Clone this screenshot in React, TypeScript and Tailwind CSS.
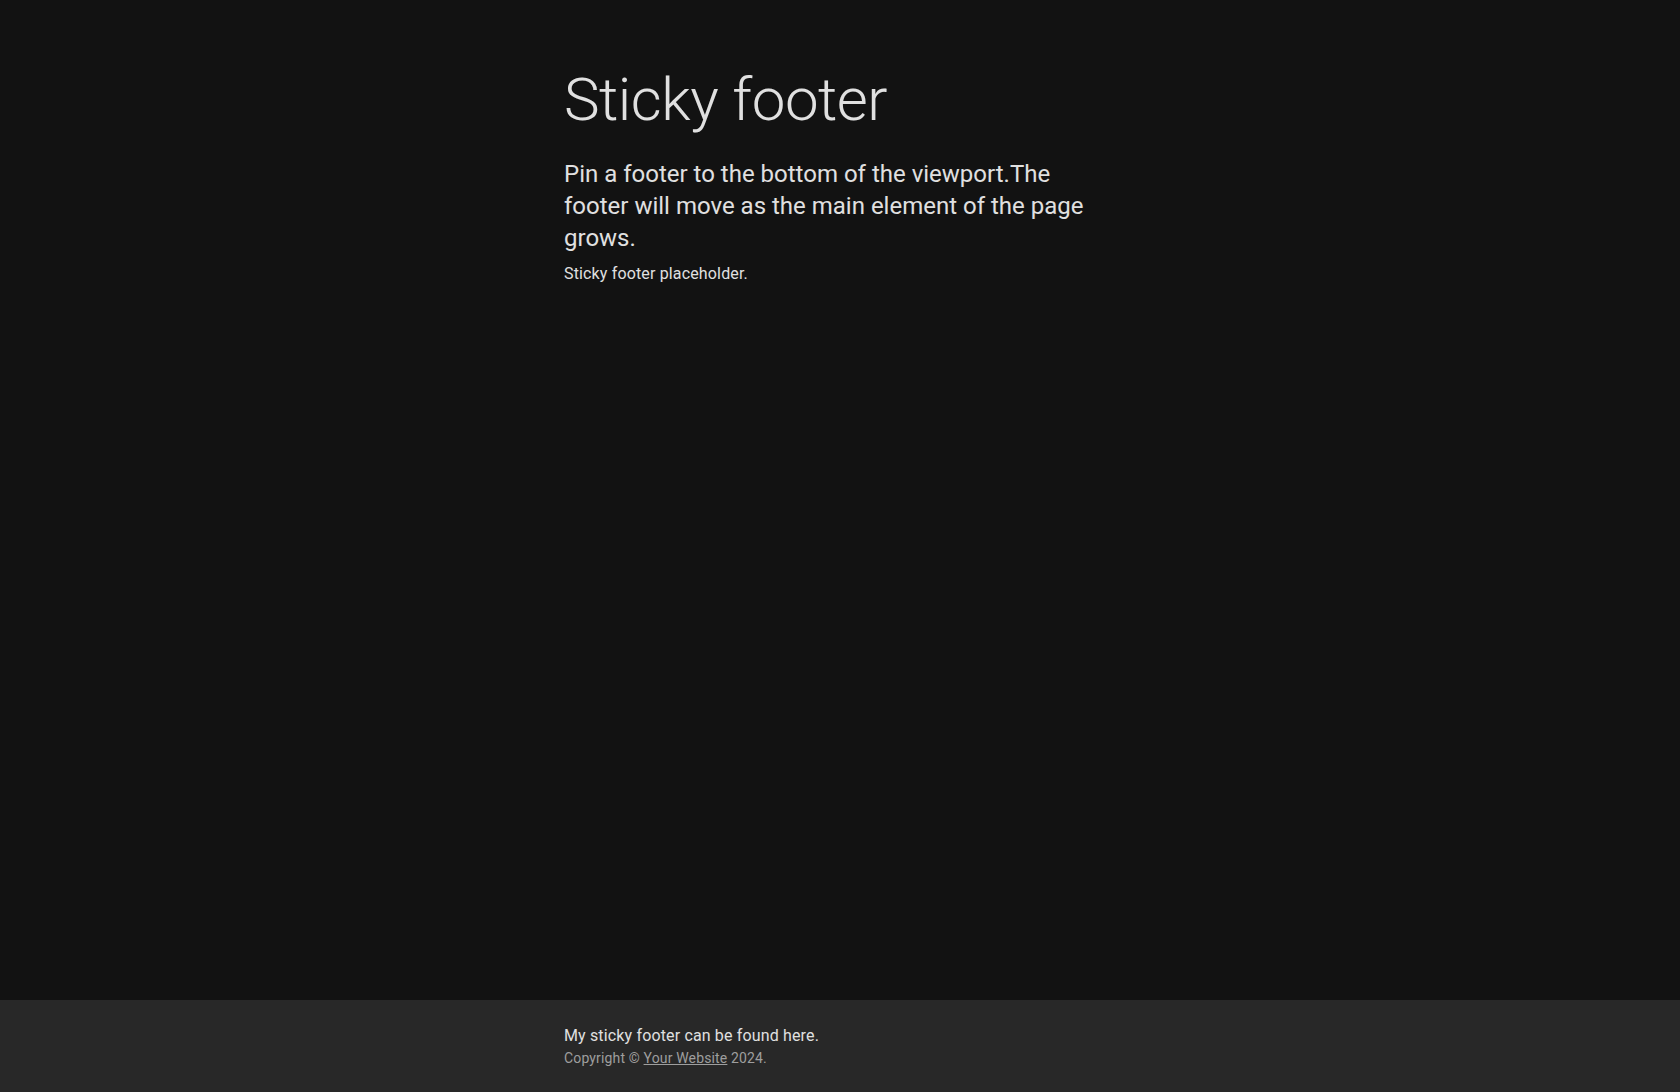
import React from 'react';

export default function App() {
  return (
    <div className="flex min-h-screen flex-col bg-[#121212] font-['Roboto','Liberation_Sans',sans-serif] text-[#e0e0e0]">
      {/* Main content */}
      <main className="mx-auto w-[552px] flex-1 pt-16">
        <h1 className="text-6xl leading-[72px] font-light tracking-[-0.5px]">Sticky footer</h1>
        <p className="mt-[22px] text-2xl">
          Pin a footer to the bottom of the viewport.The footer will move as the main element of the page grows.
        </p>
        <p className="mt-2 text-base tracking-[0.15px]">Sticky footer placeholder.</p>
      </main>

      {/* Footer */}
      <footer className="bg-[#282828] py-6">
        <div className="mx-auto w-[552px]">
          <p className="text-base tracking-[0.15px]">My sticky footer can be found here.</p>
          <p className="text-sm tracking-[0.15px] text-[#9e9e9e]">
            Copyright © <a href="#" className="underline">Your Website</a> 2024.
          </p>
        </div>
      </footer>
    </div>
  );
}
